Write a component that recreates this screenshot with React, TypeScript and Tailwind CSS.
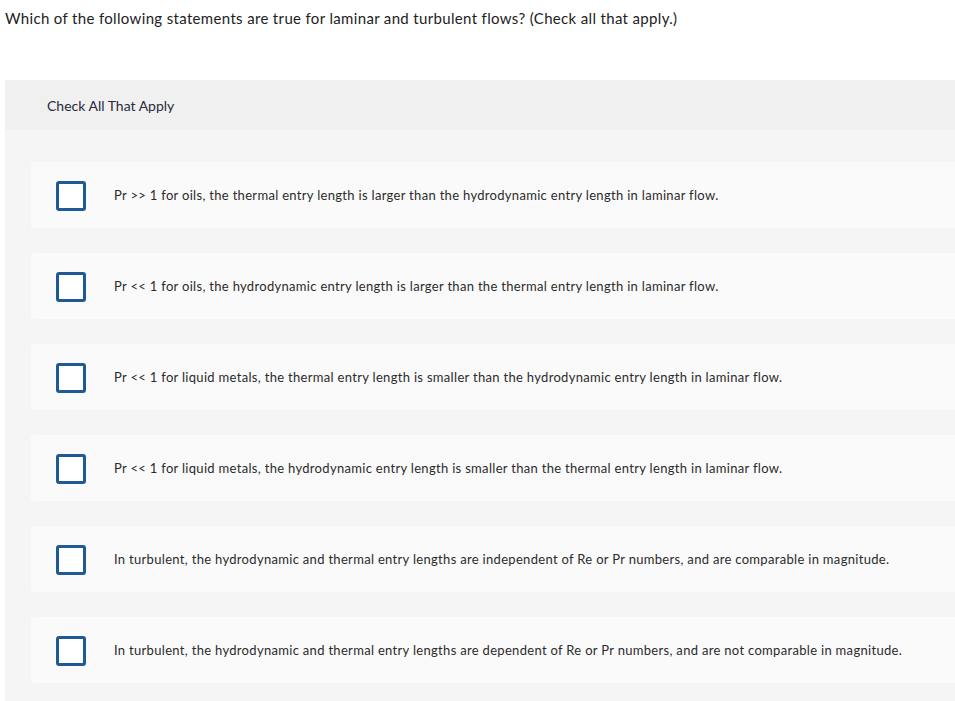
import React from "react";

const items = [
  "Pr >> 1 for oils, the thermal entry length is larger than the hydrodynamic entry length in laminar flow.",
  "Pr << 1 for oils, the hydrodynamic entry length is larger than the thermal entry length in laminar flow.",
  "Pr << 1 for liquid metals, the thermal entry length is smaller than the hydrodynamic entry length in laminar flow.",
  "Pr << 1 for liquid metals, the hydrodynamic entry length is smaller than the thermal entry length in laminar flow.",
  "In turbulent, the hydrodynamic and thermal entry lengths are independent of Re or Pr numbers, and are comparable in magnitude.",
  "In turbulent, the hydrodynamic and thermal entry lengths are dependent of Re or Pr numbers, and are not comparable in magnitude.",
];

export default function App() {
  return (
    <div
      className="w-[955px] h-[701px] bg-white overflow-hidden text-[#333333]"
      style={{ fontFamily: "Lato, 'Open Sans', sans-serif" }}
    >
      <div className="pl-[5px] pt-[8px] h-[80px] text-[15px] leading-[20px] tracking-[0.34px] text-[#222222]">
        Which of the following statements are true for laminar and turbulent flows? (Check all that apply.)
      </div>
      <div className="ml-[5px] bg-[#f5f5f5] h-[621px]">
        <div className="h-[50px] bg-[#f0f0f0] flex items-center pl-[42px] text-[14px] text-[#2a2a3a]">
          Check All That Apply
        </div>
        <div className="pl-[26px] pt-[32px] flex flex-col gap-[25px]">
          {items.map((t, i) => (
            <div
              key={i}
              className="h-[66px] bg-[#fafafa] rounded-l-[3px] flex items-center pl-[25px]"
            >
              <div className="w-[30px] h-[30px] border-[3px] border-[#1f5a94] rounded-[3px] bg-white shrink-0 mt-[2px]" />
              <div className="ml-[28px] text-[13px] leading-[18px] tracking-[0.31px] text-[#2b2b2b]">{t}</div>
            </div>
          ))}
        </div>
      </div>
    </div>
  );
}
